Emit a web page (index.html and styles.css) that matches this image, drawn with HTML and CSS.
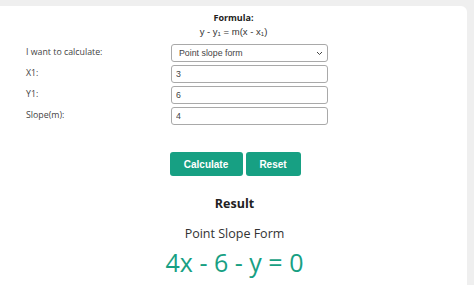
FILE: index.html
```html
<!DOCTYPE html>
<html lang="en">
<head>
    <meta charset="UTF-8">
    <meta name="viewport" content="width=device-width, initial-scale=1.0">
    <title>Point Slope Form Calculator</title>
    <link rel="stylesheet" href="styles.css">
</head>
<body>

    <div class="card">
        <!-- Formula -->
        <div class="formula">
            <div class="formula-title">Formula:</div>
            <div class="formula-text">y - y<sub>1</sub> = m(x - x<sub>1</sub>)</div>
        </div>

        <!-- Inputs -->
        <div class="form">
            <label for="calcType">I want to calculate:</label>
            <div class="select-wrap">
                <select id="calcType" class="field">
                    <option>Point slope form</option>
                </select>
                <svg class="chevron" width="7" height="5" viewBox="0 0 7 5">
                    <path d="M1 1 L3.5 3.5 L6 1" fill="none" stroke="#444" stroke-width="1"/>
                </svg>
            </div>

            <label for="x1">X1:</label>
            <input type="text" id="x1" class="field" value="3">

            <label for="y1">Y1:</label>
            <input type="text" id="y1" class="field" value="6">

            <label for="slope">Slope(m):</label>
            <input type="text" id="slope" class="field" value="4">
        </div>

        <div class="buttons">
            <button class="button calc">Calculate</button>
            <button class="button reset">Reset</button>
        </div>

        <!-- Result -->
        <div class="result">
            <h3>Result</h3>
            <p class="result-label">Point Slope Form</p>
            <p class="result-value">4x - 6 - y = 0</p>
        </div>
    </div>

</body>
</html>
```

FILE: styles.css
```css
body {
    margin: 0;
    background: #efefef;
    font-family: "Open Sans", sans-serif;
    color: #333;
}

.card {
    background: #fff;
    margin: 6px 7px 0 0;
    border-top-right-radius: 6px;
    height: 279px;
    overflow: hidden;
}

.formula {
    text-align: center;
    padding-top: 5px;
}

.formula-title {
    font-weight: bold;
    font-size: 9px;
    line-height: 14px;
    color: #222;
}

.formula-text {
    font-family: "Liberation Sans", Arial, sans-serif;
    font-size: 9.5px;
    line-height: 14px;
}

.formula-text sub {
    font-size: 6px;
    vertical-align: -1px;
}

.form {
    display: grid;
    grid-template-columns: 145px 157px;
    grid-auto-rows: 18px;
    row-gap: 3px;
    padding: 3px 0 0 26px;
}

.form label {
    font-size: 8.8px;
    line-height: 16px;
    color: #444;
}

.field {
    display: block;
    box-sizing: border-box;
    width: 157px;
    height: 18px;
    margin: 0;
    border: 1px solid #a9a9a9;
    border-radius: 3px;
    background: #fff;
    font-family: "Liberation Sans", Arial, sans-serif;
    font-size: 8.8px;
    color: #444;
    padding: 0 4px;
}

.select-wrap {
    position: relative;
}

select.field {
    appearance: none;
    padding-left: 7px;
}

.chevron {
    position: absolute;
    right: 5px;
    top: 7px;
    pointer-events: none;
}

.buttons {
    display: flex;
    justify-content: center;
    gap: 3px;
    margin-top: 27px;
    padding-left: 3px;
}

.button {
    height: 24px;
    border: none;
    border-radius: 3px;
    background: #17a083;
    color: #fff;
    font-family: "Liberation Sans", Arial, sans-serif;
    font-weight: bold;
    font-size: 10px;
    cursor: pointer;
}

.calc {
    width: 73px;
}

.reset {
    width: 55px;
}

.result {
    text-align: center;
    padding-left: 2px;
}

.result h3 {
    font-size: 12.5px;
    margin: 18px 0 0;
    line-height: 20px;
    color: #222;
}

.result-label {
    font-size: 12.5px;
    margin: 11px 0 0;
    line-height: 18px;
}

.result-value {
    font-size: 25px;
    color: #17a083;
    margin: 2px 0 0;
    line-height: 34px;
}
```
